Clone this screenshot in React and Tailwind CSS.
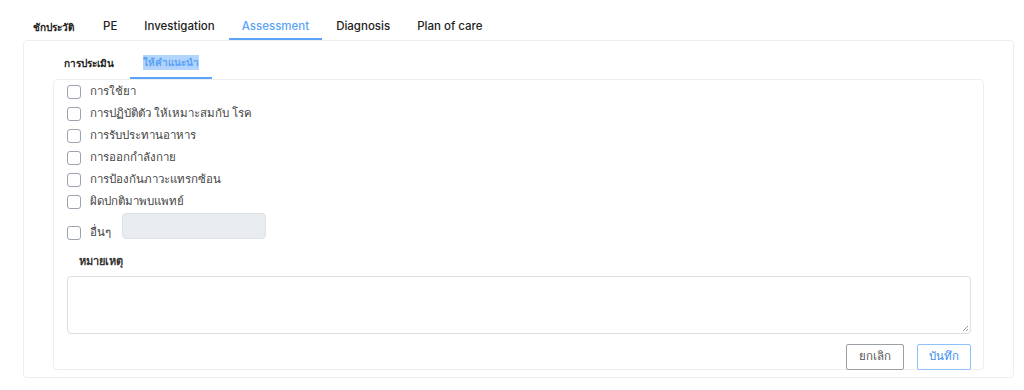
import React from "react";

const tabs = ["ชักประวัติ", "PE", "Investigation", "Assessment", "Diagnosis", "Plan of care"];
const items = [
  "การใช้ยา",
  "การปฏิบัติตัว ให้เหมาะสมกับ โรค",
  "การรับประทานอาหาร",
  "การออกกำลังกาย",
  "การป้องกันภาวะแทรกซ้อน",
  "ผิดปกติมาพบแพทย์",
];

function Box() {
  return <span className="block w-[14px] h-[14px] border border-[#9ca3af] rounded-[3px] bg-white shrink-0" />;
}

export default function App() {
  return (
    <div className="w-[1024px] h-[390px] bg-white text-[#212529] overflow-hidden" style={{ fontFamily: "Inter, 'Noto Sans', sans-serif" }}>
      <div className="flex pl-[20px] pt-[12px] gap-[1px]">
        {tabs.map((t, i) => (
          <div
            key={t}
            className={
              "h-[28px] pl-[13px] pt-[4px] flex items-center font-medium border-b-2 " +
              (i === 0 ? "pr-[15px] text-[10px] font-semibold " : "pr-[13px] text-[11.5px] ") +
              (i === 3 ? "text-[#5aa3f7] border-[#5aa3f7]" : "border-transparent text-[#222]")
            }
          >
            {t}
          </div>
        ))}
      </div>
      <div className="ml-[23px] w-[991px] h-[338px] border border-[#eceef0] rounded-[4px] px-[29px] pt-[7px]">
        <div className="flex -ml-[3px]">
          <div className="h-[31px] pl-[14px] pr-[16px] flex items-center text-[10px] font-semibold text-[#222]">การประเมิน</div>
          <div className="h-[31px] px-[13px] flex items-center text-[10px] font-semibold text-[#5aa3f7] border-b-2 border-[#5aa3f7]">
            <span className="bg-[#b3d4fc]">ให้คำแนะนำ</span>
          </div>
        </div>
        <div className="w-[931px] h-[291px] border border-[#eceef0] rounded-[4px] pl-[13px] pr-[12px] pt-[1px]">
          <div className="flex flex-col">
            {items.map((t) => (
              <label key={t} className="h-[22px] flex items-center gap-[9px] text-[11.5px] text-[#444]">
                <Box />
                <span>{t}</span>
              </label>
            ))}
            <div className="flex items-center gap-[9px] text-[11.5px] text-[#444] -mt-[2px]">
              <span className="mt-[13px]"><Box /></span>
              <span className="mt-[13px] w-[22px]">อื่นๆ</span>
              <div className="ml-[1px] w-[144px] h-[26px] rounded-[4px] bg-[#e9ecef] border border-[#dee2e6]" />
            </div>
          </div>
          <div className="pl-[12px] mt-[12px] text-[11px] font-semibold text-[#333]">หมายเหตุ</div>
          <div className="mt-[6px] h-[58px] border border-[#dcdfe3] rounded-[4px] relative">
            <svg className="absolute right-[1px] bottom-[1px]" width="7" height="7" viewBox="0 0 7 7">
              <path d="M6 1 L1 6 M6 4 L4 6" stroke="#999" strokeWidth="1" />
            </svg>
          </div>
          <div className="flex justify-end gap-[13px] mt-[10px]">
            <button className="w-[58px] h-[26px] border border-[#9aa0a6] rounded-[2px] text-[11.5px] text-[#555]">ยกเลิก</button>
            <button className="w-[54px] h-[26px] border border-[#8ec1fb] rounded-[2px] text-[11.5px] text-[#3d8ef0]">บันทึก</button>
          </div>
        </div>
      </div>
    </div>
  );
}
